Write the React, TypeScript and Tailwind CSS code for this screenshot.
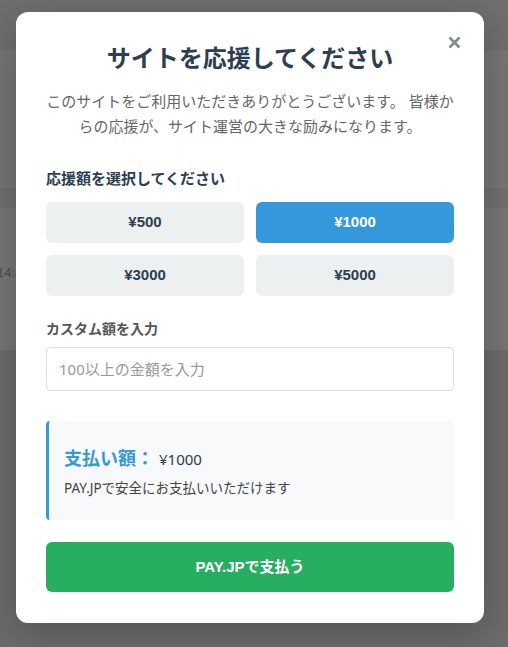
import React from "react";

const jp = { fontFamily: '"Noto Sans", "Noto Sans CJK JP", sans-serif' };
const btnFont = { fontFamily: '"Liberation Sans", "Noto Sans CJK JP", sans-serif' };

export default function App() {
  const amounts = ["¥500", "¥1000", "¥3000", "¥5000"];
  return (
    <div className="relative h-[647px] w-[508px] overflow-hidden bg-[#6c6c6c]" style={jp}>
      {/* underlying page (dimmed) */}
      <div className="flex flex-col">
        <div className="h-[50px] bg-[#6f6f6f]" />
        <div className="h-[140px] border-b border-[#6c6c6c] bg-[#767676]" />
        <div className="h-[18px] bg-[#717171]" />
        <div className="flex h-[142px] items-start bg-[#777777] pt-[58px]">
          <span className="-ml-[3px] text-[13px] leading-none text-[#4d4d4d]" style={btnFont}>14:45</span>
        </div>
        <div className="h-[297px] bg-[#6c6c6c]" />
      </div>

      {/* modal overlay */}
      <div className="absolute inset-0 flex items-start pl-[16px] pt-[12px]">
        <div className="relative flex w-[468px] flex-col rounded-[12px] bg-white px-[30px] pb-[31px] pt-[30px] shadow-[0_10px_40px_rgba(0,0,0,0.25)]">
          <button className="absolute right-[23px] top-[23px] flex h-[14px] w-[14px] items-center justify-center" aria-label="close">
            <svg width="13" height="13" viewBox="0 0 13 13">
              <path d="M1.5 1.5 L11.5 11.5 M11.5 1.5 L1.5 11.5" stroke="#7f8c8d" strokeWidth="2.6" />
            </svg>
          </button>

          <h2 className="text-center text-[24px] font-bold leading-[32px] text-[#2c3e50]">
            サイトを応援してください
          </h2>
          <p className="mt-[15px] text-center text-[15px] leading-[25px] text-[#666666]">
            このサイトをご利用いただきありがとうございます。 皆様からの応援が、サイト運営の大きな励みになります。
          </p>

          <div className="mt-[28px] text-[15px] font-bold leading-[22px] text-[#2c3e50]">
            応援額を選択してください
          </div>
          <div className="mt-[13px] grid grid-cols-2 gap-[12px]">
            {amounts.map((a) => {
              const sel = a === "¥1000";
              return (
                <button
                  key={a}
                  className={
                    sel
                      ? "h-[41px] rounded-[6px] bg-[#3498db] text-[15px] font-bold text-white"
                      : "h-[41px] rounded-[6px] bg-[#ecf0f1] text-[15px] font-bold text-[#2c3e50]"
                  }
                  style={btnFont}
                >
                  {a}
                </button>
              );
            })}
          </div>

          <div className="mt-[23px] text-[14px] font-bold leading-[20px] text-[#555555]">
            カスタム額を入力
          </div>
          <input
            className="mt-[8px] h-[44px] w-full rounded-[4px] border border-[#dddddd] px-[12px] text-[15px] text-[#333] outline-none placeholder:text-[#999999]"
            placeholder="100以上の金額を入力"
            style={jp}
          />

          <div className="mt-[30px] rounded-[4px] border-l-[3px] border-[#3498db] bg-[#f8f9fa] pb-[22px] pl-[15px] pr-[15px] pt-[24px]">
            <div className="flex items-baseline">
              <span className="text-[18px] font-bold leading-[27px] text-[#3498db]">支払い額：</span>
              <span className="ml-[5px] text-[15px] leading-[27px] text-[#2c3e50]">¥1000</span>
            </div>
            <p className="mt-[5px] text-[13.5px] leading-[20px] text-[#444444]">
              PAY.JPで安全にお支払いいただけます
            </p>
          </div>

          <button
            className="mt-[22px] h-[50px] w-full rounded-[6px] bg-[#27ae60] text-[15px] font-bold text-white"
            style={btnFont}
          >
            PAY.JPで支払う
          </button>
        </div>
      </div>
    </div>
  );
}
